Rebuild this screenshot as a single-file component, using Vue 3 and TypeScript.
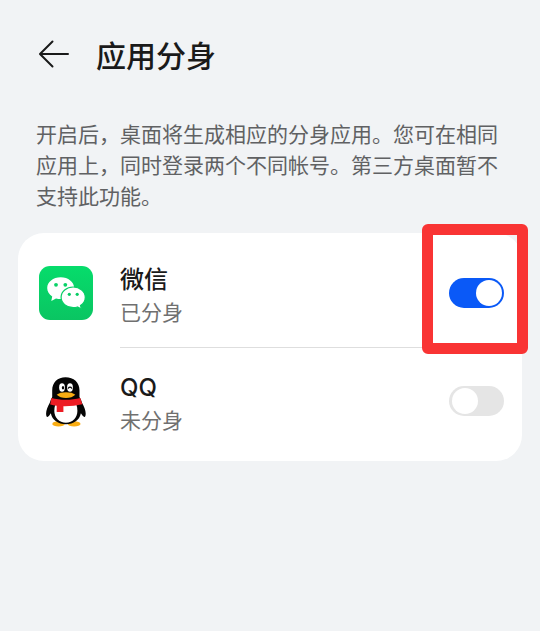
<script setup lang="ts">
import { reactive } from 'vue'

interface AppTwin {
  id: string
  name: string
  enabled: boolean
  highlighted: boolean
}

const apps = reactive<AppTwin[]>([
  { id: 'wechat', name: '微信', enabled: true, highlighted: true },
  { id: 'qq', name: 'QQ', enabled: false, highlighted: false },
])
</script>

<template>
  <main class="screen">
    <header class="bar">
      <button class="back" type="button" aria-label="返回">
        <svg width="32" height="32" viewBox="0 0 32 32" fill="none" stroke="#1a1a1a" stroke-width="2" stroke-linecap="round" stroke-linejoin="round">
          <path d="M2.500 16H30M14.500 3.500 2 16l12.500 12.500" />
        </svg>
      </button>
      <h1 class="title">应用分身</h1>
    </header>

    <p class="intro">开启后，桌面将生成相应的分身应用。您可在相同应用上，同时登录两个不同帐号。第三方桌面暂不支持此功能。</p>

    <ul class="card">
      <li v-for="app in apps" :key="app.id" class="row">
        <svg v-if="app.id === 'wechat'" class="icon" viewBox="0 0 54 54" aria-hidden="true">
          <defs>
            <linearGradient id="wechat-green" x1="0" y1="0" x2="0" y2="1">
              <stop offset="0" stop-color="#06dc6b" />
              <stop offset="1" stop-color="#0ac562" />
            </linearGradient>
          </defs>
          <rect width="54" height="54" rx="11" fill="url(#wechat-green)" />
          <path fill="#fff" d="M21.700 11.200C14.100 11.200 8.200 16 8.200 22c0 3.500 1.900 6.500 5 8.600L12.300 35l4.700-2.500c1.500.4 3.100.6 4.700.6 7.500 0 13.500-4.900 13.500-11s-6-10.900-13.500-10.900Z" />
          <circle cx="17" cy="18.800" r="1.900" fill="#08d267" />
          <circle cx="26.300" cy="18.800" r="1.900" fill="#08d267" />
          <path fill="#fff" stroke="#08cf66" stroke-width="1.200" d="M34.200 21c-6.700 0-12.100 4.600-12.100 10.300s5.400 10.300 12.100 10.300c1.500 0 2.900-.2 4.200-.6l4.100 2.100-1-3.500c2.900-1.900 4.800-4.900 4.800-8.300 0-5.700-5.400-10.300-12.100-10.300Z" />
          <circle cx="30.300" cy="28.300" r="1.600" fill="#08cc65" />
          <circle cx="38.200" cy="28.300" r="1.600" fill="#08cc65" />
        </svg>
        <svg v-else class="icon" viewBox="0 0 54 54" aria-hidden="true">
          <ellipse cx="19.500" cy="49.900" rx="6.200" ry="2.700" fill="#f9ad13" />
          <ellipse cx="35.100" cy="49.900" rx="6.400" ry="2.700" fill="#f9ad13" />
          <path fill="#050505" d="M26.500 3.300c-7.900 0-13.300 5.200-13.300 13.200v6.500c-1 1.800-1.900 3.700-2.400 5.700C8.800 32.500 7.100 36 7.100 39.500c0 2.400.6 3.600 1.300 3.400 1-.2 2.400-1.800 3.400-3.600 1.500 6.900 7.300 11 15.100 11s13.500-4.100 15-11c1 1.800 2.500 3.400 3.500 3.600.7.200 1.300-1 1.300-3.400 0-3.500-1.700-7-3.700-10.800-.5-2-1.400-3.900-2.500-5.700v-6.500c0-8-5.700-13.200-14-13.200Z" />
          <path fill="#fff" d="M16.500 30c-.8 2-1.200 4.300-1.200 6.800 0 7 4.700 11.900 11.600 11.900s11.500-4.900 11.500-11.900c0-2.500-.4-4.800-1.200-6.800Z" />
          <path fill="#ed1c24" d="M12.400 23.900c8.300 2.400 20.200 2.400 28.900 0l2 6.400c-5.800 1.400-12.300 2-18.900 1.900V38h-6.700v-6.300c-2.300-.3-4.700-.7-6.500-1.200Z" />
          <ellipse cx="23" cy="13.500" rx="2.900" ry="4.200" fill="#fff" />
          <ellipse cx="31" cy="13.500" rx="2.900" ry="4.200" fill="#fff" />
          <ellipse cx="24" cy="13.800" rx="1.200" ry="1.800" fill="#050505" />
          <path d="M29.300 14.200c.8-1.400 2.600-1.400 3.400 0" fill="none" stroke="#050505" stroke-width="1.200" stroke-linecap="round" />
          <path fill="#f9ad13" d="M17.700 20.700c2-1.700 5.400-2.500 9.300-2.500s7.300.8 9.300 2.500c-2 2-5.400 3.300-9.300 3.300s-7.300-1.300-9.300-3.300Z" />
        </svg>

        <div class="body">
          <label class="text" :for="`switch-${app.id}`">
            <span class="name">{{ app.name }}</span>
            <span class="state">{{ app.enabled ? '已分身' : '未分身' }}</span>
          </label>
          <span class="control">
            <input :id="`switch-${app.id}`" v-model="app.enabled" class="switch" type="checkbox" role="switch" />
            <span v-if="app.highlighted" class="marker" aria-hidden="true"></span>
          </span>
        </div>
      </li>
    </ul>
  </main>
</template>

<style>
body {
  margin: 0;
  background: #f1f3f5;
}
</style>

<style scoped>
.screen {
  box-sizing: border-box;
  min-height: 100vh;
  padding: 32px 18px;
  background: #f1f3f5;
  color: #1a1a1a;
  font-family: "Noto Sans CJK SC", sans-serif;
}

.bar {
  display: flex;
  align-items: center;
  gap: 26px;
  padding-left: 20px;
}

.back {
  display: flex;
  padding: 0;
  border: 0;
  background: none;
  cursor: pointer;
}

.title {
  margin: 0;
  font-size: 30px;
  font-weight: 500;
  line-height: 44px;
}

.intro {
  margin: 42px 18px 22px;
  color: #606163;
  font-size: 21px;
  line-height: 31px;
}

.card {
  margin: 0;
  padding: 6px 0;
  border-radius: 26px;
  background: #fff;
  list-style: none;
}

.row {
  display: flex;
  align-items: center;
  gap: 27px;
  padding: 0 18px 0 21px;
}

.icon {
  flex: none;
  width: 54px;
  height: 54px;
}

.body {
  display: flex;
  flex: 1;
  align-items: center;
  justify-content: space-between;
  padding: 23px 0;
}

.row + .row .body {
  box-shadow: inset 0 1px #dedede;
}

.text {
  display: flex;
  flex-direction: column;
}

.name {
  font-family: Inter, "Noto Sans CJK SC", sans-serif;
  font-size: 24px;
  font-weight: 500;
  line-height: 36px;
}

.state {
  color: #707070;
  font-size: 21px;
  line-height: 26px;
}

.control {
  position: relative;
  display: flex;
}

.switch {
  display: flex;
  box-sizing: border-box;
  width: 55px;
  height: 30px;
  margin: 0;
  padding: 2px 2px 2px 3px;
  border-radius: 15px;
  appearance: none;
  background: #e5e5e5;
  cursor: pointer;
}

.switch::before {
  width: 26px;
  height: 26px;
  border-radius: 50%;
  background: #fff;
  content: "";
}

.switch:checked {
  justify-content: flex-end;
  background: #0a59f7;
}

.marker {
  position: absolute;
  inset: -54px -24px -46px -27px;
  border: 11px solid #f93434;
  border-radius: 6px;
  pointer-events: none;
}
</style>
